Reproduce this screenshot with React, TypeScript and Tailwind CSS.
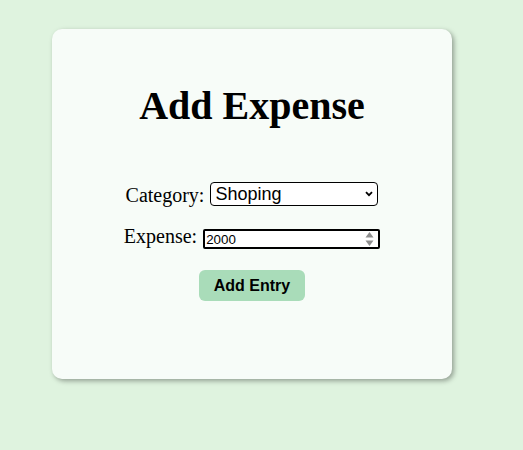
export default function App() {
  return (
    <div className="min-h-[450px] w-full overflow-hidden bg-[#dff3df] pt-[29px] pl-[52px]">
      <div className="flex h-[350px] w-[400px] flex-col items-center rounded-[10px] bg-[#f7fcf8] pt-[54px] shadow-[2px_2px_5px_rgba(0,0,0,0.35)]">
        <h1 className="font-['Liberation_Serif',serif] text-[40px] leading-[46px] font-bold text-black">
          Add Expense
        </h1>

        <div className="mt-[53px] flex items-start gap-[6px] font-['Liberation_Serif',serif] text-[20px] leading-[26px] text-black">
          <label>Category:</label>
          <div className="relative flex">
            <select
              defaultValue="Shoping"
              className="h-[24px] w-[168px] appearance-none rounded-[4px] border border-black bg-white pl-[4px] font-['Liberation_Sans',sans-serif] text-[18px] leading-[22px] text-black outline-none"
            >
              <option>Shoping</option>
              <option>Food</option>
              <option>Travel</option>
              <option>Bills</option>
            </select>
            <svg
              className="pointer-events-none absolute top-[9px] right-[5px]"
              width="8"
              height="6"
              viewBox="0 0 8 6"
            >
              <path d="M1 1.2 L4 4.2 L7 1.2" fill="none" stroke="#000" strokeWidth="1.8" />
            </svg>
          </div>
        </div>

        <div className="mt-[21px] flex items-start gap-[6px] font-['Liberation_Serif',serif] text-[20px] leading-[26px] text-black">
          <label className="-mt-[6px]">Expense:</label>
          <div className="relative flex">
            <input
              type="text"
              readOnly
              value="2000"
              className="h-[20px] w-[177px] rounded-[2px] border-2 border-black bg-white px-[1px] font-['Liberation_Sans',sans-serif] text-[13.33px] leading-[16px] text-black outline-none"
            />
            <svg
              className="pointer-events-none absolute top-[2px] right-[6px]"
              width="9"
              height="16"
              viewBox="0 0 9 16"
            >
              <path d="M4.5 1 L8.5 6.5 L0.5 6.5 Z" fill="#8f8f8f" />
              <path d="M4.5 15 L8.5 9.5 L0.5 9.5 Z" fill="#8f8f8f" />
            </svg>
          </div>
        </div>

        <button className="mt-[21px] h-[31px] rounded-[6px] bg-[#a9dcb9] px-[15px] font-['Liberation_Sans',sans-serif] text-[16px] font-bold text-black">
          Add Entry
        </button>
      </div>
    </div>
  );
}
